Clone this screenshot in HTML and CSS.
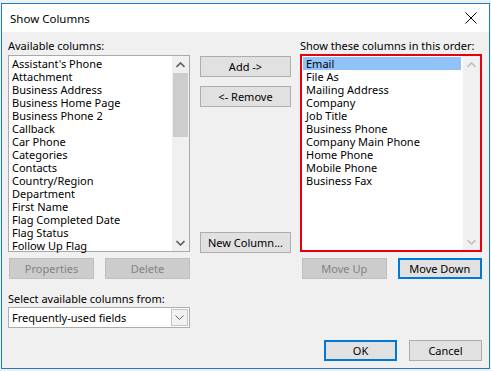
FILE: index.html
```html
<!DOCTYPE html>
<html lang="en">
<head>
    <meta charset="UTF-8">
    <title>Show Columns</title>
    <link rel="stylesheet" href="styles.css">
</head>
<body>

<div class="dialog">
    <div class="titlebar">
        <span class="title">Show Columns</span>
        <svg class="close" width="12" height="12" viewBox="0 0 12 12">
            <path d="M0.5 0.5 L11.5 11.5 M11.5 0.5 L0.5 11.5" stroke="#000" stroke-width="1" fill="none"/>
        </svg>
    </div>

    <div class="content">
        <div class="col colLeft">
            <div class="label">Available columns:</div>
            <div class="listbox available">
                <ul class="items">
                    <li>Assistant's Phone</li>
                    <li>Attachment</li>
                    <li>Business Address</li>
                    <li>Business Home Page</li>
                    <li>Business Phone 2</li>
                    <li>Callback</li>
                    <li>Car Phone</li>
                    <li>Categories</li>
                    <li>Contacts</li>
                    <li>Country/Region</li>
                    <li>Department</li>
                    <li>First Name</li>
                    <li>Flag Completed Date</li>
                    <li>Flag Status</li>
                    <li>Follow Up Flag</li>
                </ul>
                <div class="scrollbar">
                    <div class="arrow">
                        <svg width="9" height="6" viewBox="0 0 9 6"><path d="M0.5 5 L4.5 1 L8.5 5" stroke="#606060" stroke-width="1.6" fill="none"/></svg>
                    </div>
                    <div class="track"><div class="thumb"></div></div>
                    <div class="arrow">
                        <svg width="9" height="6" viewBox="0 0 9 6"><path d="M0.5 1 L4.5 5 L8.5 1" stroke="#606060" stroke-width="1.6" fill="none"/></svg>
                    </div>
                </div>
            </div>
            <div class="btnRow">
                <button class="btn" disabled>Properties</button>
                <button class="btn" disabled>Delete</button>
            </div>
            <div class="label selectLabel">Select available columns from:</div>
            <div class="dropdown">
                <span>Frequently-used fields</span>
                <span class="dropBtn">
                    <svg width="9" height="5" viewBox="0 0 9 5"><path d="M0.5 0.5 L4.5 4.5 L8.5 0.5" stroke="#606060" stroke-width="1" fill="none"/></svg>
                </span>
            </div>
        </div>

        <div class="col colMid">
            <button class="btn midBtn">Add -&gt;</button>
            <button class="btn midBtn">&lt;- Remove</button>
            <button class="btn midBtn newCol">New Column...</button>
        </div>

        <div class="col colRight">
            <div class="label">Show these columns in this order:</div>
            <div class="listbox shown">
                <ul class="items">
                    <li class="selected">Email</li>
                    <li>File As</li>
                    <li>Mailing Address</li>
                    <li>Company</li>
                    <li>Job Title</li>
                    <li>Business Phone</li>
                    <li>Company Main Phone</li>
                    <li>Home Phone</li>
                    <li>Mobile Phone</li>
                    <li>Business Fax</li>
                </ul>
                <div class="scrollbar off">
                    <div class="arrow">
                        <svg width="9" height="6" viewBox="0 0 9 6"><path d="M0.5 5 L4.5 1 L8.5 5" stroke="#c0c0c0" stroke-width="1.6" fill="none"/></svg>
                    </div>
                    <div class="track"></div>
                    <div class="arrow">
                        <svg width="9" height="6" viewBox="0 0 9 6"><path d="M0.5 1 L4.5 5 L8.5 1" stroke="#c0c0c0" stroke-width="1.6" fill="none"/></svg>
                    </div>
                </div>
            </div>
            <div class="btnRow moveRow">
                <button class="btn" disabled>Move Up</button>
                <button class="btn default">Move Down</button>
            </div>
            <div class="footer">
                <button class="btn default">OK</button>
                <button class="btn">Cancel</button>
            </div>
        </div>
    </div>
</div>

</body>
</html>
```

FILE: styles.css
```css
body {
    font-family: 'Noto Sans', sans-serif;
    font-size: 11px;
    margin: 0;
    padding: 0;
    color: #000;
    background-color: #f0f0f0;
    width: 491px;
    height: 371px;
    overflow: hidden;
}

.dialog {
    margin: 3px 0 0 1px;
    width: 489px;
    height: 366px;
    box-sizing: border-box;
    border: 1px solid #1c7bd4;
    background-color: #f0f0f0;
}

.titlebar {
    height: 28px;
    background-color: #fff;
    display: flex;
    align-items: center;
    justify-content: space-between;
    padding: 0 12px 0 8px;
}

.title {
    font-size: 11.5px;
}

.close {
    display: block;
}

.content {
    display: flex;
    padding: 6px 0 0 6px;
}

.col {
    display: flex;
    flex-direction: column;
}

.colLeft {
    width: 182px;
}

.colMid {
    width: 91px;
    margin-left: 10px;
    padding-top: 18px;
}

.colRight {
    width: 182px;
    margin-left: 9px;
}

.label {
    height: 16px;
    line-height: 16px;
    white-space: nowrap;
}

.listbox {
    background-color: #fff;
    box-sizing: border-box;
    display: flex;
    justify-content: space-between;
}

.available {
    height: 197px;
    margin-top: 1px;
    border: 1px solid #a9a9a9;
}

.shown {
    height: 198px;
    border: 2px solid #e8000d;
}

.items {
    list-style: none;
    margin: 0;
    padding: 1px 0 0 0;
    flex: 1;
}

.items li {
    height: 13px;
    line-height: 13px;
    padding-left: 3px;
    white-space: nowrap;
}

.shown .items li {
    margin-left: 1px;
    padding-left: 3px;
}

.items li.selected {
    background-color: #91c3f8;
}

.scrollbar {
    width: 17px;
    display: flex;
    flex-direction: column;
    background-color: #f0f0f0;
}

.shown .scrollbar {
    margin-left: 2px;
}

.arrow {
    height: 17px;
    display: flex;
    align-items: center;
    justify-content: center;
}

.track {
    flex: 1;
}

.thumb {
    height: 64px;
    background-color: #cdcdcd;
    margin: 0 1px;
}

.btn {
    font-family: 'Noto Sans', sans-serif;
    font-size: 11px;
    height: 21px;
    padding: 0;
    background-color: #e1e1e1;
    border: 1px solid #adadad;
    color: #000;
    box-sizing: border-box;
    white-space: nowrap;
}

.btn:disabled {
    background-color: #cccccc;
    border-color: #bfbfbf;
    color: #838383;
}

.btn.default {
    border: 2px solid #0078d7;
}

.btnRow {
    display: flex;
    margin-top: 6px;
    padding-left: 1px;
    gap: 11px;
}

.btnRow .btn {
    width: 85px;
}

.moveRow {
    padding-left: 2px;
}

.midBtn {
    width: 91px;
    height: 21px;
}

.midBtn + .midBtn {
    margin-top: 9px;
}

.midBtn.newCol {
    margin-top: 125px;
}

.selectLabel {
    margin-top: 12px;
}

.dropdown {
    height: 21px;
    box-sizing: border-box;
    border: 1px solid #adadad;
    background-color: #fff;
    display: flex;
    align-items: center;
    justify-content: space-between;
    padding: 0 1px 0 3px;
}

.dropBtn {
    width: 17px;
    height: 17px;
    box-sizing: border-box;
    border: 1px solid #c4c4c4;
    background-color: #f2f2f2;
    display: flex;
    align-items: center;
    justify-content: center;
}

.footer {
    display: flex;
    justify-content: flex-end;
    gap: 12px;
    margin-top: 61px;
}

.footer .btn {
    width: 73px;
}
```
